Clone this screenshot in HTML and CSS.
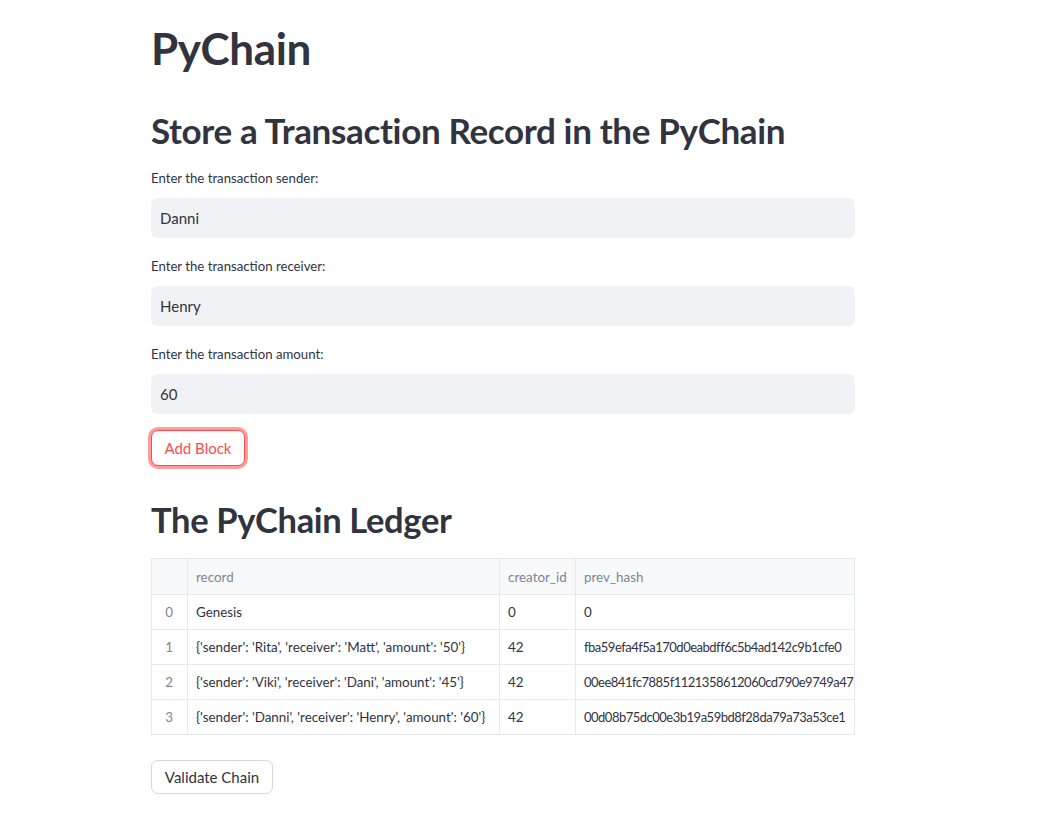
FILE: index.html
```html
<!DOCTYPE html>
<html lang="en">
<head>
<meta charset="utf-8">
<title>PyChain</title>
<link rel="stylesheet" href="styles.css">
</head>
<body>
<main class="main">
  <h1 class="title">PyChain</h1>
  <h2 class="heading heading-first">Store a Transaction Record in the PyChain</h2>

  <div class="field">
    <label class="label">Enter the transaction sender:</label>
    <div class="input">Danni</div>
  </div>
  <div class="field">
    <label class="label">Enter the transaction receiver:</label>
    <div class="input">Henry</div>
  </div>
  <div class="field">
    <label class="label">Enter the transaction amount:</label>
    <div class="input">60</div>
  </div>

  <button class="btn btn-focus">Add Block</button>

  <h2 class="heading heading-ledger">The PyChain Ledger</h2>

  <div class="frame">
    <table class="grid">
      <thead>
        <tr>
          <th class="idx"></th>
          <th class="c-record">record</th>
          <th class="c-creator">creator_id</th>
          <th class="c-hash">prev_hash</th>
        </tr>
      </thead>
      <tbody>
        <tr>
          <td class="idx">0</td>
          <td>Genesis</td>
          <td>0</td>
          <td>0</td>
        </tr>
        <tr>
          <td class="idx">1</td>
          <td>{'sender': 'Rita', 'receiver': 'Matt', 'amount': '50'}</td>
          <td>42</td>
          <td class="hash">fba59efa4f5a170d0eabdff6c5b4ad142c9b1cfe0</td>
        </tr>
        <tr>
          <td class="idx">2</td>
          <td>{'sender': 'Viki', 'receiver': 'Dani', 'amount': '45'}</td>
          <td>42</td>
          <td class="hash">00ee841fc7885f1121358612060cd790e9749a47</td>
        </tr>
        <tr>
          <td class="idx">3</td>
          <td>{'sender': 'Danni', 'receiver': 'Henry', 'amount': '60'}</td>
          <td>42</td>
          <td class="hash">00d08b75dc00e3b19a59bd8f28da79a73a53ce1</td>
        </tr>
      </tbody>
    </table>
  </div>

  <button class="btn btn-plain">Validate Chain</button>
</main>
</body>
</html>
```
FILE: styles.css
```css
html, body {
  margin: 0;
  padding: 0;
  background: #ffffff;
}
body {
  font-family: "Lato", "Open Sans", sans-serif;
  color: #31333f;
}
.main {
  width: 704px;
  margin-left: 151px;
  padding-top: 22px;
  padding-bottom: 20px;
  display: flex;
  flex-direction: column;
  align-items: flex-start;
}
.title {
  margin: 0;
  font-size: 44px;
  font-weight: 700;
  line-height: 52px;
  letter-spacing: -0.4px;
}
.heading {
  margin: 0;
  font-size: 35px;
  font-weight: 700;
  line-height: 44px;
  letter-spacing: -0.35px;
}
.heading-first {
  margin-top: 34px;
}
.heading-ledger {
  margin-top: 32px;
  font-size: 34.5px;
}
.field {
  width: 100%;
  display: flex;
  flex-direction: column;
  margin-top: 20px;
}
.heading-first + .field {
  margin-top: 18px;
}
.label {
  font-size: 13.2px;
  line-height: 16px;
  margin-bottom: 12px;
}
.input {
  height: 40px;
  box-sizing: border-box;
  background: #f0f2f6;
  border-radius: 6px;
  padding: 0 9px;
  display: flex;
  align-items: center;
  font-size: 15px;
}
.btn {
  font-family: inherit;
  font-size: 15px;
  color: #31333f;
  background: #ffffff;
  border: 1px solid #d6d6d9;
  border-radius: 7px;
  box-sizing: border-box;
  padding: 0 12px;
  cursor: pointer;
}
.btn-focus {
  margin-top: 16px;
  height: 36px;
  width: 94px;
  color: #ff4b4b;
  border-color: #ff4b4b;
  box-shadow: 0 0 0 3px rgba(255, 75, 75, 0.55);
}
.btn-plain {
  margin-top: 25px;
  height: 34px;
  width: 122px;
}
.frame {
  margin-top: 16px;
  width: 704px;
  overflow: hidden;
  border-right: 1px solid #e6e9ef;
  box-sizing: border-box;
}
.grid {
  border-collapse: collapse;
  font-size: 13.4px;
  white-space: nowrap;
  table-layout: fixed;
  width: 1000px;
}
.grid th, .grid td {
  border: 1px solid #e6e9ef;
  padding: 0 8px;
  text-align: left;
  height: 35px;
  box-sizing: border-box;
}
.grid th {
  height: 36px;
  background: #f8f9fb;
  color: #808495;
  font-weight: 400;
}
.grid .idx {
  width: 36px;
  text-align: right;
  color: #808495;
  padding-right: 14px;
}
.grid th.idx {
  padding: 0;
}
.grid .hash {
  font-size: 13px;
  letter-spacing: -0.5px;
}
.c-record { width: 312px; }
.c-creator { width: 76px; }
.c-hash { width: 576px; }
```
